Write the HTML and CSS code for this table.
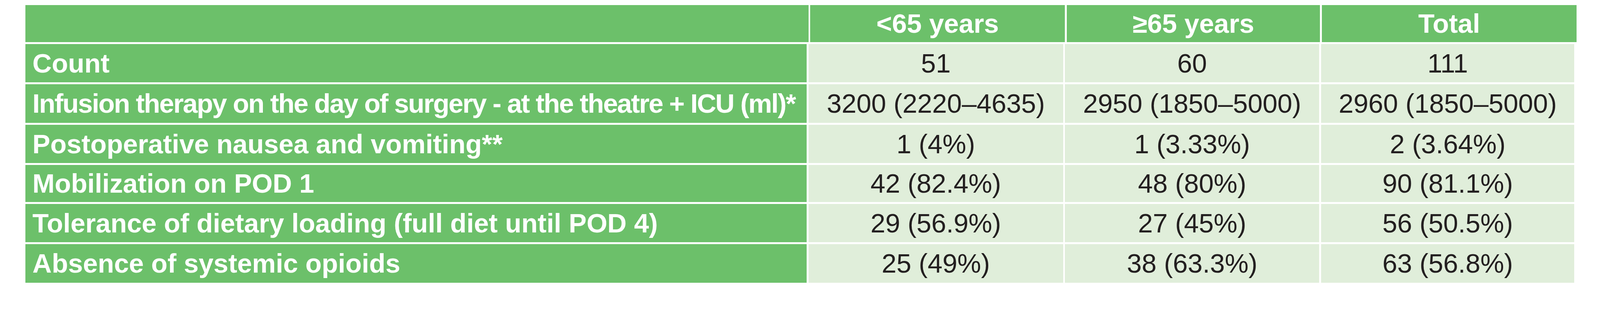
FILE: index.html
```html
<!DOCTYPE html>
<html lang="en">
<head>
<meta charset="utf-8">
<title>Table</title>
<link rel="stylesheet" href="styles.css">
</head>
<body>
<div class="table">
  <div class="row head">
    <div class="cell label"></div>
    <div class="cell">&lt;65 years</div>
    <div class="cell">≥65 years</div>
    <div class="cell">Total</div>
  </div>
  <div class="row">
    <div class="cell label">Count</div>
    <div class="cell val">51</div>
    <div class="cell val">60</div>
    <div class="cell val">111</div>
  </div>
  <div class="row">
    <div class="cell label tight">Infusion therapy on the day of surgery - at the theatre + ICU (ml)*</div>
    <div class="cell val">3200 (2220–4635)</div>
    <div class="cell val">2950 (1850–5000)</div>
    <div class="cell val">2960 (1850–5000)</div>
  </div>
  <div class="row">
    <div class="cell label">Postoperative nausea and vomiting**</div>
    <div class="cell val">1 (4%)</div>
    <div class="cell val">1 (3.33%)</div>
    <div class="cell val">2 (3.64%)</div>
  </div>
  <div class="row short">
    <div class="cell label">Mobilization on POD 1</div>
    <div class="cell val">42 (82.4%)</div>
    <div class="cell val">48 (80%)</div>
    <div class="cell val">90 (81.1%)</div>
  </div>
  <div class="row">
    <div class="cell label">Tolerance of dietary loading (full diet until POD 4)</div>
    <div class="cell val">29 (56.9%)</div>
    <div class="cell val">27 (45%)</div>
    <div class="cell val">56 (50.5%)</div>
  </div>
  <div class="row">
    <div class="cell label">Absence of systemic opioids</div>
    <div class="cell val">25 (49%)</div>
    <div class="cell val">38 (63.3%)</div>
    <div class="cell val">63 (56.8%)</div>
  </div>
</div>
</body>
</html>
```
FILE: styles.css
```css
:root {
  /* one pixel of the 4435px-wide design */
  --u: calc(100vw / 4435);
}

html, body {
  margin: 0;
  padding: 0;
  background: #ffffff;
}

body {
  font-family: "Liberation Sans", Arial, sans-serif;
}

.table {
  display: flex;
  flex-direction: column;
  gap: calc(5 * var(--u));
  margin: calc(14 * var(--u)) 0 0 calc(70 * var(--u));
  width: calc(4300 * var(--u));
}

.row {
  display: grid;
  grid-template-columns:
    calc(2166 * var(--u))
    calc(706 * var(--u))
    calc(705 * var(--u))
    calc(702 * var(--u));
  column-gap: calc(5 * var(--u));
  height: calc(107 * var(--u));
}

.row.short {
  height: calc(103 * var(--u));
}

.row.head {
  grid-template-columns:
    calc(2171 * var(--u))
    calc(706 * var(--u))
    calc(702 * var(--u))
    calc(706 * var(--u));
  height: calc(103 * var(--u));
}

.cell {
  display: flex;
  align-items: center;
  justify-content: center;
  font-size: calc(74 * var(--u));
  line-height: 1;
  white-space: nowrap;
  overflow: hidden;
}

.head .cell {
  background: #6cc06a;
  color: #ffffff;
  font-weight: 700;
}

.label {
  justify-content: flex-start;
  padding-left: calc(20 * var(--u));
  background: #6cc06a;
  color: #ffffff;
  font-weight: 700;
}

.label.tight {
  letter-spacing: calc(-2.4 * var(--u));
}

.val {
  background: #e0eeda;
  color: #231f20;
  font-weight: 400;
}
```
